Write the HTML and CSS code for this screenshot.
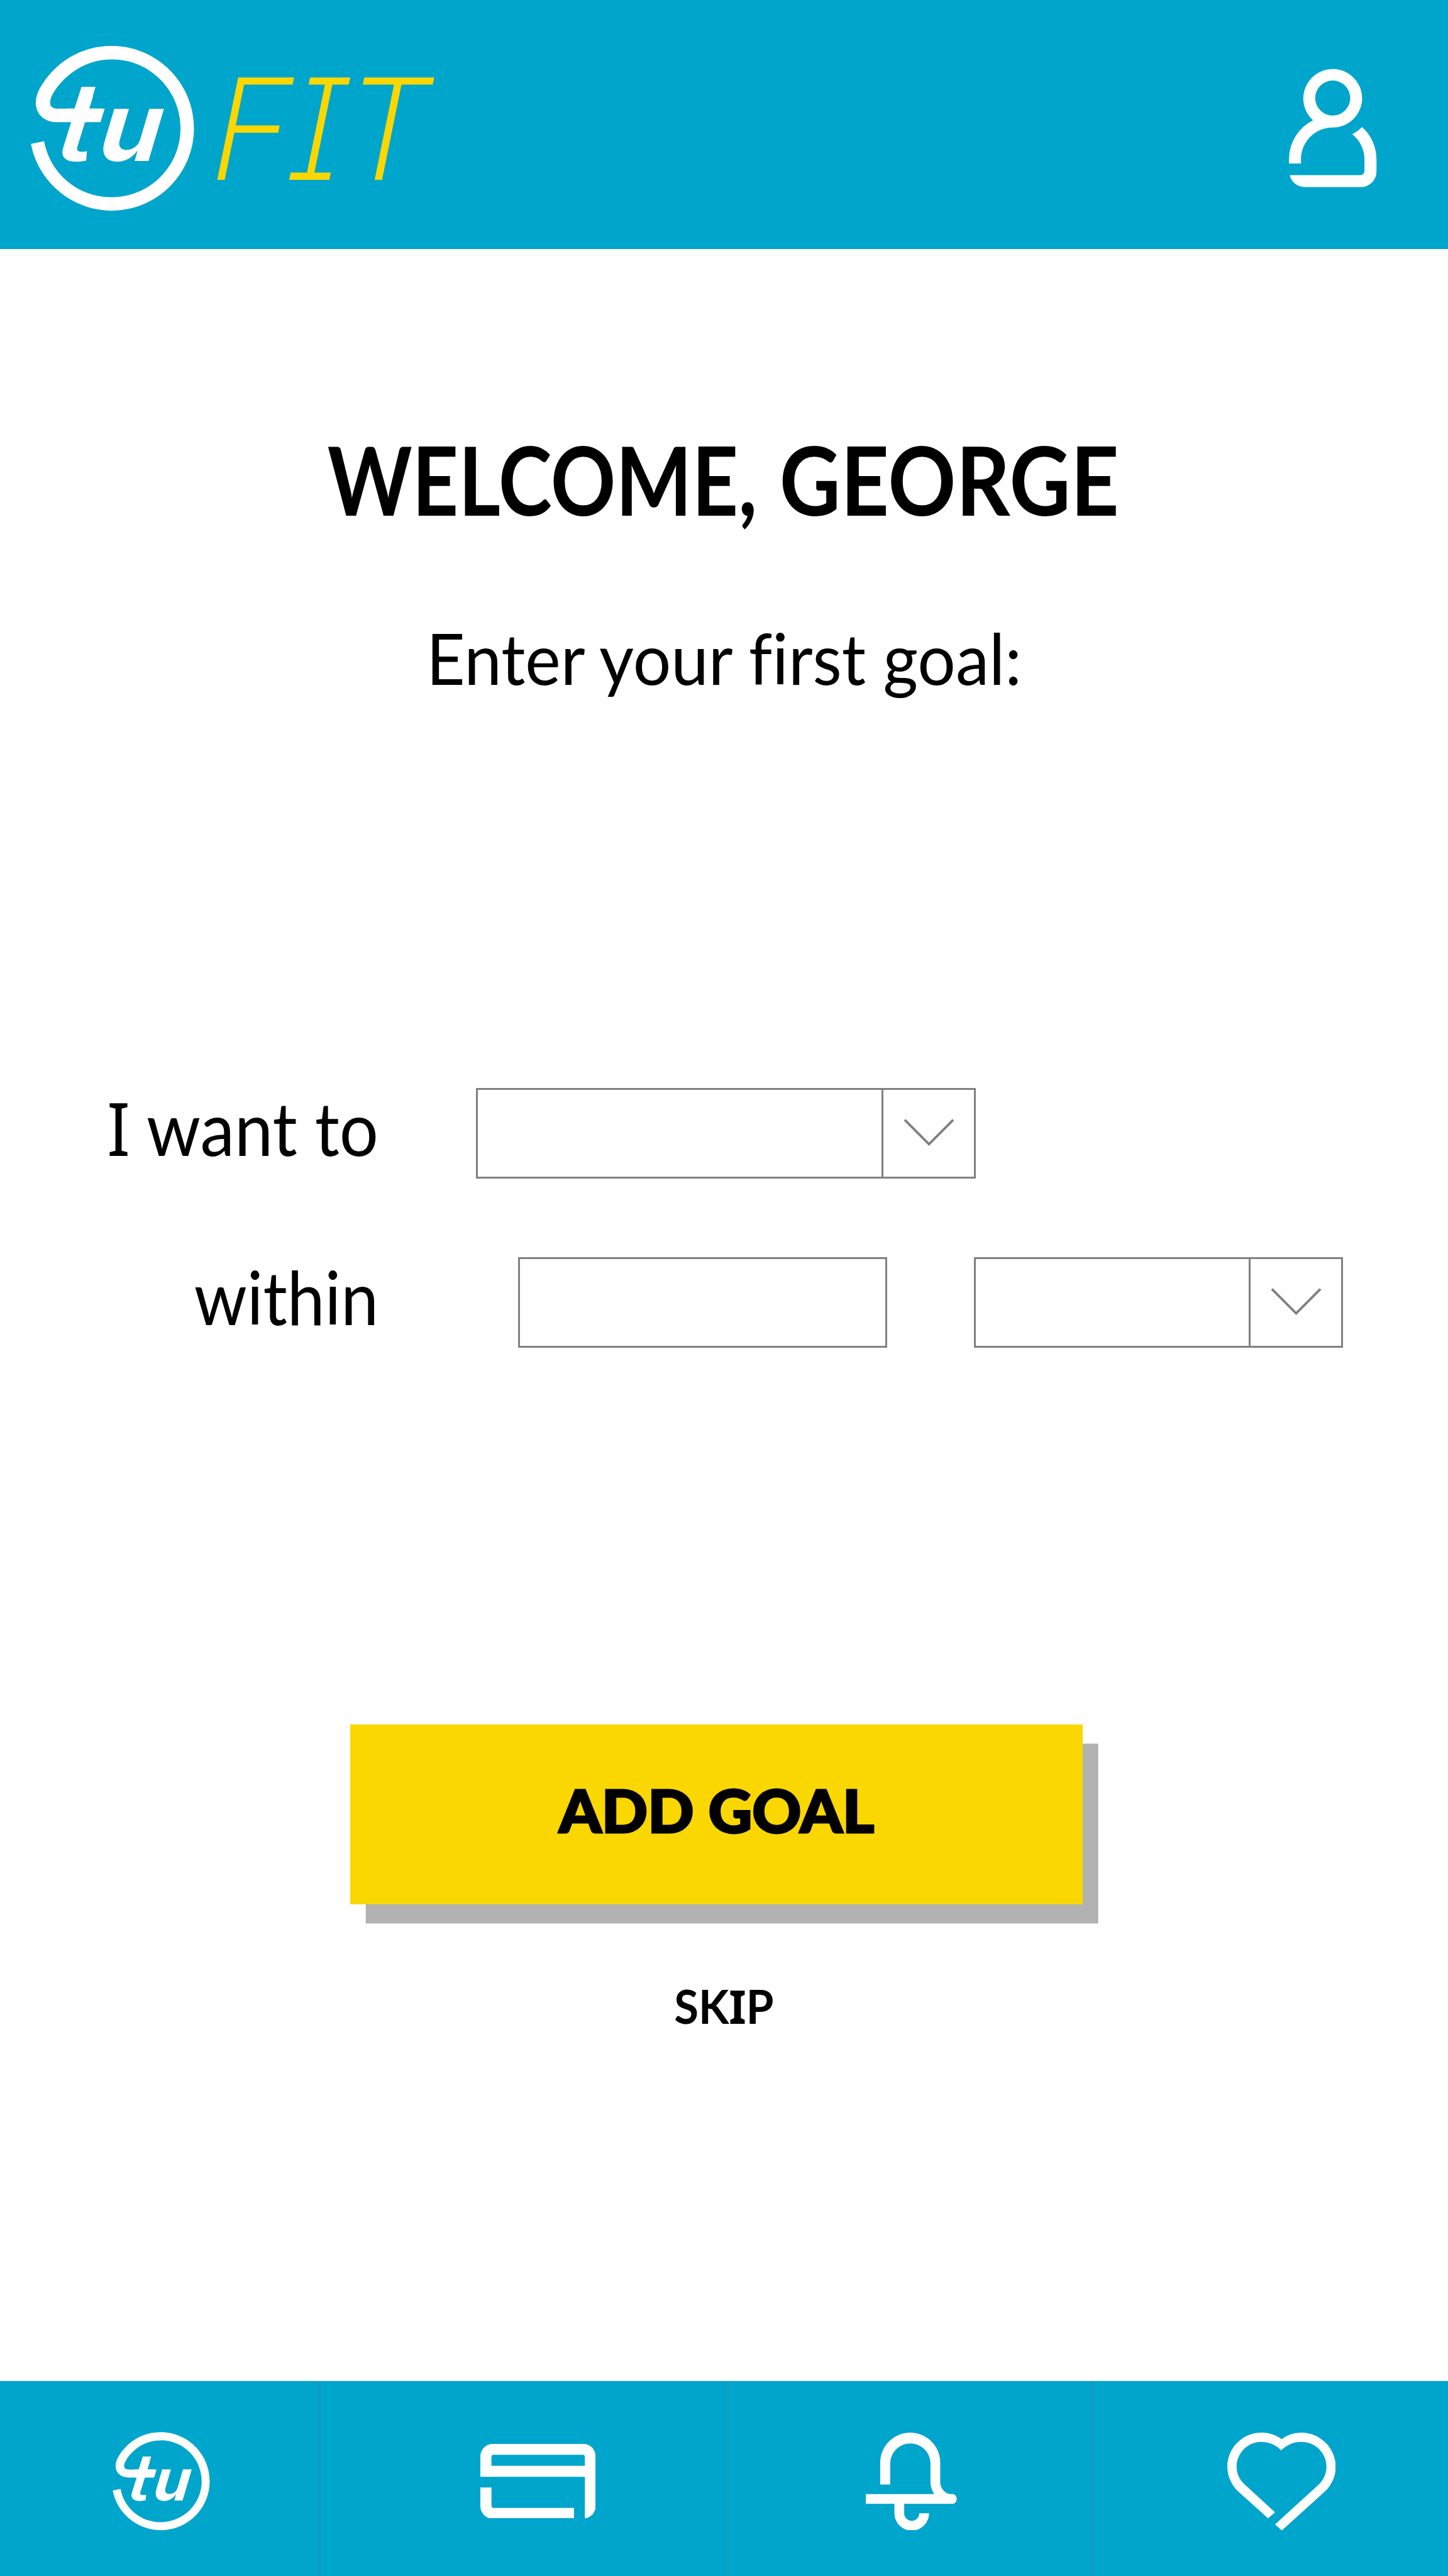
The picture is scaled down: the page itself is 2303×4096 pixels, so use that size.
FILE: index.html
```html
<!DOCTYPE html>
<html lang="en">
<head>
<meta charset="utf-8">
<title>tu FIT</title>
<link rel="stylesheet" href="styles.css">
</head>
<body>
<svg class="defs" aria-hidden="true">
  <symbol id="tu-mark" viewBox="0 0 1200 1200">
    <path d="M50 691L135 674C172 880 350 1036 570 1036C818 1036 1018 838 1018 590C1018 345 820 145 575 145C400 145 280 240 205 345C185 375 174 400 174 425C174 450 192 463 225 463H332L377 322H468L425 463H527L500 551H222C140 551 81 500 81 425C81 395 90 365 105 335C205 160 375 57 572 57C866 57 1105 297 1105 590C1105 885 866 1123 572 1123C315 1123 95 935 50 691Z"/>
    <text class="mark-letter mark-t" transform="translate(202 801) skewX(-7) scale(1.14 1)">t</text>
    <text class="mark-letter" transform="translate(478 801) skewX(-7) scale(1.04 1)">u</text>
  </symbol>
</svg>
<div class="screen">
  <header class="topbar">
    <a class="brand">
      <svg class="brand-mark"><use href="#tu-mark"/></svg>
      <span class="brand-name">FIT</span>
    </a>
    <svg class="profile" viewBox="249 145 567 768">
      <path fill-rule="evenodd" d="M249 760V732A283 283 0 0 1 405 480A190.5 190.5 0 1 1 723 336A190.5 190.5 0 0 1 532.5 527A205 205 0 0 0 327 732V760ZM532.5 222.5A113.5 113.5 0 1 0 532.5 449.5A113.5 113.5 0 1 0 532.5 222.5Z"/>
      <path d="M723 524A283 283 0 0 1 816 732V812A101 101 0 0 1 715 913H350A100 100 0 0 1 254 835H712A26 26 0 0 0 738 809V732A205 205 0 0 0 659 571Q695 552 723 524Z"/>
    </svg>
  </header>
  <main class="content">
    <h1 class="title"><span class="greeting">WELCOME,</span> <span class="user">GEORGE</span></h1>
    <p class="subtitle"><span>Enter your first goal:</span></p>
    <form class="goal-form">
      <div class="row">
        <label class="label label-want"><span class="slab">I</span> want to</label>
        <div class="select select-goal"><svg class="chevron" viewBox="0 0 84 45"><path d="M2 2L42 42L82 2"/></svg></div>
      </div>
      <div class="row">
        <label class="label label-within">within</label>
        <div class="field"></div>
        <div class="select select-unit"><svg class="chevron" viewBox="0 0 84 45"><path d="M2 2L42 42L82 2"/></svg></div>
      </div>
    </form>
    <button class="add"><span>ADD GOAL</span></button>
    <a class="skip"><span>SK<span class="slab">I</span>P</span></a>
  </main>
  <nav class="tabs">
    <a class="tab tab-home"><svg class="tab-mark"><use href="#tu-mark"/></svg></a>
    <a class="tab tab-card">
      <svg class="card" viewBox="0 0 249 161.3">
        <path fill-rule="evenodd" d="M26 0H223C237 0 249 12 249 28V133C249 148 238 159 225.5 161V70.8H0V28C0 12 12 0 26 0ZM24 47.3H225.5V28A4 4 0 0 0 221.5 23.5H28.5A4 4 0 0 0 24 28Z"/>
        <path d="M0 94H24V133A5 5 0 0 0 29 138H202V161.3H26C12 161.3 0 149 0 134Z"/>
      </svg>
    </a>
    <a class="tab tab-bell">
      <svg class="bell" viewBox="0 0 196.9 211.3">
        <path d="M31.1 112V64.8A64.8 64.8 0 0 1 160.7 64.8V107C160.7 119 169 130 181 132.7H188C199 134 199 152.5 188 153.7H82.9V174A16.3 16.3 0 0 0 115.5 174H136.6A37.4 37.4 0 0 1 61.8 174V153.7H0V132.7H147.6Q139.6 120 139.6 107V64.8A43.5 43.5 0 0 0 52.7 64.8V112Z"/>
      </svg>
    </a>
    <a class="tab tab-heart">
      <svg class="heart" viewBox="0 0 234 211.3">
        <path d="M0 73.7C0 33 33 0 73.3 0C90 0 105 5 117.5 14.3C129 5 144 0 159.7 0C200 0 234 33 234 73.7C234 93 226 111 213 124.7L117.5 211.3L103 198L198.9 110.7C208 101 214 88 214 73.7C214 44 190 20 159.7 20C143 20 130 26 116 38C104 26 90 20 73.3 20C44 20 20 44 20 73.7C20 88 26 101 36 110.7L103 172L87.9 185L21 124.7C8 111 0 93 0 73.7Z"/>
      </svg>
    </a>
  </nav>
</div>
</body>
</html>
```
FILE: styles.css
```css
* { box-sizing: border-box; }
body { margin: 0; background: #fff; color: #000; font-family: Lato, "Noto Sans", sans-serif; font-variant-ligatures: none; }
svg { display: block; fill: #fff; flex: none; }
.defs { position: absolute; width: 0; height: 0; }
.mark-letter { font: italic 700 620px Inter, sans-serif; }
.mark-t { font-weight: 600; }
.screen { width: 2303px; height: 4096px; display: flex; flex-direction: column; overflow: hidden; }

/* Header */
.topbar { height: 396px; background: #00a5cc; display: flex; justify-content: space-between; padding: 0 113.5px 0 37px; flex: none; }
.brand { display: flex; }
.brand-mark { width: 294.8px; height: 294.8px; margin-top: 59px; }
.brand-name {
  margin: 71px 0 0 2px;
  font: italic 200 221px/267px Inter, sans-serif;
  font-feature-settings: "cv08";
  color: #fad700;
  white-space: nowrap;
  transform: skewX(-2.5deg) scaleX(.968);
  transform-origin: 0 214px;
  -webkit-text-stroke: 2px #fad700;
}
.profile { width: 139.3px; height: 188.6px; margin-top: 109.3px; }

/* Goal entry */
.content { flex: 1; display: flex; flex-direction: column; align-items: center; }
.title { margin: 274.5px 0 0; font-size: 150.5px; line-height: 181px; font-weight: 700; white-space: nowrap; }
.greeting { transform: scaleX(.8525); transform-origin: 622px 50%; }
.user { transform: scaleX(.891); transform-origin: -259px 50%; }
.subtitle { margin: 125.5px 0 0; font-size: 113px; line-height: 136px; white-space: nowrap; }
.subtitle span { transform: scaleX(.946); }
.title span, .subtitle span, .add span, .skip > span { display: inline-block; }
.slab { font-family: "Noto Sans", sans-serif; line-height: 1; }

.goal-form { align-self: stretch; margin-top: 617px; display: flex; flex-direction: column; gap: 125px; }
.row { display: flex; height: 144px; }
.label { width: 602px; flex: none; margin-top: -8px; text-align: right; font-size: 117.5px; line-height: 141px; white-space: nowrap; transform-origin: right; }
.label-want { transform: scaleX(.933); }
.label-within { transform: scaleX(.911); }
.field, .select { height: 144px; border: 3px solid #808080; flex: none; }
.select { display: flex; justify-content: flex-end; }
.select .chevron { width: 147px; height: 100%; border-left: 3px solid #808080; padding: 45px 31px 48px 32px; }
.chevron path { fill: none; stroke: #808080; stroke-width: 4; }
.select-goal { width: 795px; margin-left: 154.5px; }
.field { width: 587px; margin-left: 221.5px; }
.select-unit { width: 587px; margin-left: 138.5px; }

/* Actions */
.add {
  width: 1164.5px; height: 286px;
  margin: 598.5px 0 0 -24.5px;
  padding: 0 0 13px;
  border: 0;
  background: #fad700;
  box-shadow: 24.7px 30.5px 0 #b2b2b2;
  color: #000;
  font: 900 93px/114px Lato, sans-serif;
  white-space: nowrap;
}
.add span { transform: scaleX(1.037); -webkit-text-stroke: 3px #000; }
.skip { margin-top: 117.5px; font-size: 74.3px; line-height: 89px; font-weight: 700; }
.skip > span { transform: scaleX(.95); }

/* Bottom navigation */
.tabs { height: 310.5px; background: #00a5cc; display: flex; flex: none; }
.tab { display: flex; border-right: 3px solid #1798b8; padding-top: 82px; }
.tab-home { width: 510px; padding: 73.5px 0 0 172.4px; }
.tab-mark { width: 175.4px; height: 175.4px; }
.tab-card { width: 645px; padding: 100px 0 0 253.5px; }
.card { width: 183.5px; height: 118.9px; }
.tab-bell { width: 583px; padding-left: 222px; }
.bell { width: 145.1px; height: 155.7px; }
.tab-heart { flex: 1; border-right: 0; padding-left: 213.5px; }
.heart { width: 172.5px; height: 155.7px; }
```
